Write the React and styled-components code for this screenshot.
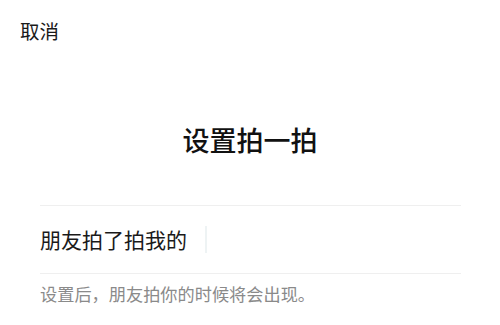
import React from 'react';
import styled, { createGlobalStyle } from 'styled-components';

const GlobalStyle = createGlobalStyle`
	html, body {
		margin: 0;
		padding: 0;
		background: #fff;
	}
	body {
		font-family: 'Noto Sans CJK SC', 'Noto Sans', sans-serif;
		color: #111;
	}
`;

const Screen = styled.div`
	width: 500px;
	height: 325px;
	overflow: hidden;
	background: #fff;
`;

const TopBar = styled.div`
	height: 62px;
	display: flex;
	align-items: center;
	padding: 0 20px;
`;

const CancelButton = styled.button`
	border: 0;
	background: none;
	padding: 0;
	font: inherit;
	font-size: 19.5px;
	line-height: 1;
	color: #1a1a1a;
	cursor: pointer;
`;

const Title = styled.h1`
	margin: 60px 0 0;
	text-align: center;
	font-size: 27px;
	line-height: 36px;
	font-weight: 500;
	color: #111;
`;

const Field = styled.div`
	margin: 47px 39px 0 40px;
	height: 67px;
	border-top: 1px solid #efefef;
	border-bottom: 1px solid #efefef;
	display: flex;
	align-items: center;
`;

const Value = styled.span`
	font-size: 21px;
	line-height: 1;
	color: #1a1a1a;
`;

const Caret = styled.span`
	width: 2px;
	height: 27px;
	margin-left: 18px;
	background: #eef3f4;
`;

const Hint = styled.p`
	margin: 9px 40px 0;
	font-size: 17.2px;
	line-height: 22px;
	color: #8a8a8a;
`;

const App = () => (
	<Screen>
		<GlobalStyle />
		<TopBar>
			<CancelButton>取消</CancelButton>
		</TopBar>
		<Title>设置拍一拍</Title>
		<Field>
			<Value>朋友拍了拍我的</Value>
			<Caret />
		</Field>
		<Hint>设置后，朋友拍你的时候将会出现。</Hint>
	</Screen>
);

export default App;
